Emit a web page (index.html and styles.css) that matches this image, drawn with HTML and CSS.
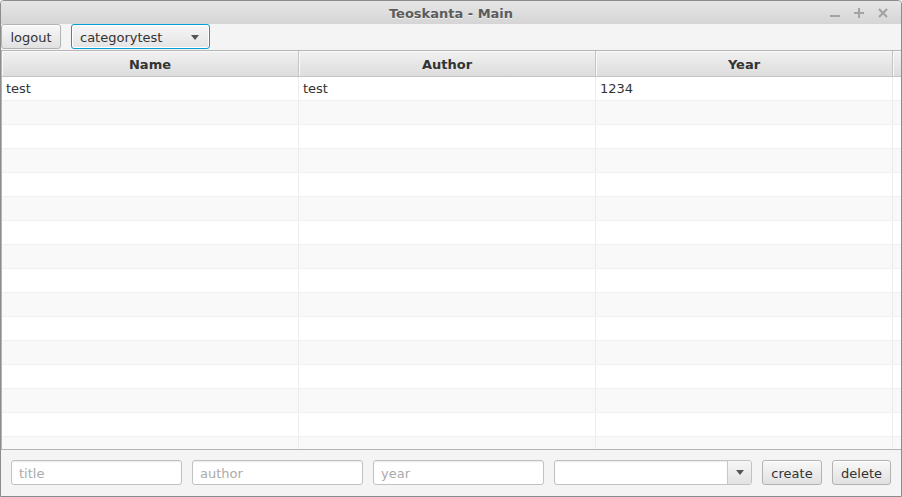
FILE: index.html
```html
<!DOCTYPE html>
<html>
<head>
<meta charset="utf-8">
<link rel="stylesheet" href="styles.css">
</head>
<body>
<div class="window">
  <div class="titlebar">
    <span class="title">Teoskanta - Main</span>
    <div class="controls">
      <svg class="ctl" width="10" height="10" viewBox="0 0 10 10"><rect x="0" y="7" width="10" height="2" fill="#a3a3a3"/></svg>
      <svg class="ctl" width="10" height="10" viewBox="0 0 10 10"><rect x="0" y="4" width="10" height="2" fill="#a3a3a3"/><rect x="4" y="0" width="2" height="10" fill="#a3a3a3"/></svg>
      <svg class="ctl" width="10" height="10" viewBox="0 0 10 10"><path d="M1 1 L9 9 M9 1 L1 9" stroke="#a3a3a3" stroke-width="2.2"/></svg>
    </div>
  </div>
  <div class="toolbar">
    <button class="btn logout">logout</button>
    <div class="combo focused">
      <span class="combo-text">categorytest</span>
      <span class="arrow"></span>
    </div>
  </div>
  <div class="table">
    <div class="thead">
      <div class="th col">Name</div>
      <div class="th col">Author</div>
      <div class="th col">Year</div>
      <div class="th filler"></div>
    </div>
    <div class="tbody">
      <div class="tr"><div class="td col">test</div><div class="td col">test</div><div class="td col">1234</div><div class="td filler"></div></div>
      <div class="tr"><div class="td col"></div><div class="td col"></div><div class="td col"></div><div class="td filler"></div></div>
      <div class="tr"><div class="td col"></div><div class="td col"></div><div class="td col"></div><div class="td filler"></div></div>
      <div class="tr"><div class="td col"></div><div class="td col"></div><div class="td col"></div><div class="td filler"></div></div>
      <div class="tr"><div class="td col"></div><div class="td col"></div><div class="td col"></div><div class="td filler"></div></div>
      <div class="tr"><div class="td col"></div><div class="td col"></div><div class="td col"></div><div class="td filler"></div></div>
      <div class="tr"><div class="td col"></div><div class="td col"></div><div class="td col"></div><div class="td filler"></div></div>
      <div class="tr"><div class="td col"></div><div class="td col"></div><div class="td col"></div><div class="td filler"></div></div>
      <div class="tr"><div class="td col"></div><div class="td col"></div><div class="td col"></div><div class="td filler"></div></div>
      <div class="tr"><div class="td col"></div><div class="td col"></div><div class="td col"></div><div class="td filler"></div></div>
      <div class="tr"><div class="td col"></div><div class="td col"></div><div class="td col"></div><div class="td filler"></div></div>
      <div class="tr"><div class="td col"></div><div class="td col"></div><div class="td col"></div><div class="td filler"></div></div>
      <div class="tr"><div class="td col"></div><div class="td col"></div><div class="td col"></div><div class="td filler"></div></div>
      <div class="tr"><div class="td col"></div><div class="td col"></div><div class="td col"></div><div class="td filler"></div></div>
      <div class="tr"><div class="td col"></div><div class="td col"></div><div class="td col"></div><div class="td filler"></div></div>
      <div class="tr"><div class="td col"></div><div class="td col"></div><div class="td col"></div><div class="td filler"></div></div>
    </div>
  </div>
  <div class="bottombar">
    <input class="field" type="text" placeholder="title">
    <input class="field" type="text" placeholder="author">
    <input class="field" type="text" placeholder="year">
    <div class="combo editable">
      <span class="combo-input"></span>
      <span class="combo-btn"><span class="arrow"></span></span>
    </div>
    <button class="btn create">create</button>
    <button class="btn delete">delete</button>
  </div>
</div>
</body>
</html>
```
FILE: styles.css
```css
* { box-sizing: border-box; }
html, body { margin: 0; padding: 0; background: #f4f4f4; }
body { font-family: "DejaVu Sans", "Liberation Sans", sans-serif; font-size: 13px; color: #333; }

.window {
  width: 902px;
  height: 497px;
  border: 1px solid #8c8c8c;
  border-radius: 4px 4px 0 0;
  background: #f4f4f4;
  display: flex;
  flex-direction: column;
  overflow: hidden;
}

.titlebar {
  height: 23px;
  flex: none;
  background: linear-gradient(#e6e6e6, #d5d5d5);
  display: flex;
  align-items: center;
  justify-content: center;
  padding-top: 2px;
  position: relative;
}
.title {
  font-weight: bold;
  font-size: 13px;
  color: #5c5c5c;
  text-shadow: 0 1px 0 rgba(255,255,255,0.6);
}
.controls {
  position: absolute;
  right: 13px;
  top: 7px;
  height: 10px;
  display: flex;
  align-items: center;
  gap: 14px;
}
.ctl { display: block; }

.toolbar {
  height: 26px;
  flex: none;
  display: flex;
  align-items: flex-start;
  gap: 10px;
  padding-left: 0;
}

.btn {
  font-family: inherit;
  font-size: 13px;
  color: #333;
  height: 25px;
  padding: 1px 8px 0;
  border: 1px solid #b3b3b3;
  border-radius: 3px;
  background: linear-gradient(#f8f8f8, #e1e1e1);
  box-shadow: inset 0 1px 0 #ffffff;
  margin: 0;
}
.logout { width: 60px; }

.combo {
  display: flex;
  align-items: center;
  height: 25px;
  border-radius: 3px;
}
.combo.focused {
  width: 139px;
  margin-left: 0;
  border: 1px solid #039ed3;
  box-shadow: inset 0 0 0 1px #ffffff;
  background: linear-gradient(#f6f6f6, #e4e4e4);
  padding: 1px 10px 0 8px;
  justify-content: space-between;
}
.arrow {
  width: 0;
  height: 0;
  border-left: 4px solid transparent;
  border-right: 4px solid transparent;
  border-top: 5px solid #555;
}

.table {
  height: 400px;
  flex: none;
  border-top: 1px solid #b5b5b5;
  border-bottom: 1px solid #b5b5b5;
  border-left: 1px solid #b5b5b5;
  background: #fff;
  display: flex;
  flex-direction: column;
  overflow: hidden;
}
.thead {
  height: 26px;
  flex: none;
  display: flex;
  border-bottom: 1px solid #c4c4c4;
  background: linear-gradient(#f1f1f1, #dddddd);
}
.th {
  height: 25px;
  display: flex;
  align-items: center;
  justify-content: center;
  padding-top: 2px;
  font-weight: bold;
  color: #333;
  border-right: 1px solid #c4c4c4;
  box-shadow: inset 1px 1px 0 #fafafa;
}
.col { width: 297px; flex: none; }
.filler { width: 7px; flex: none; }
.thead .filler { border-right: none; }

.tbody { flex: 1; overflow: hidden; }
.tr {
  height: 24px;
  display: flex;
  background: #ffffff;
  border-bottom: 1px solid #f0f0f0;
}
.tr:nth-child(even) { background: #f9f9f9; }
.td {
  height: 23px;
  padding: 0 4px;
  display: flex;
  align-items: center;
  border-right: 1px solid #ececec;
  color: #333;
}
.td.filler { border-right: none; }

.bottombar {
  flex: 1;
  display: flex;
  align-items: flex-start;
  padding: 10px 0 0 10px;
  gap: 10px;
}
.field {
  width: 171px;
  height: 25px;
  margin: 0;
  border: 1px solid #c2c2c2;
  border-radius: 3px;
  background: #fff;
  box-shadow: inset 0 1px 1px #ececec;
  padding: 2px 7px 0;
  font-family: inherit;
  font-size: 13px;
  color: #333;
  outline: none;
}
.field::placeholder { color: #ababab; }

.combo.editable {
  width: 198px;
  border: 1px solid #c2c2c2;
  overflow: hidden;
  background: #fff;
}
.combo-input { flex: 1; height: 100%; box-shadow: inset 0 1px 1px #ececec; }
.combo-btn {
  width: 24px;
  height: 100%;
  border-left: 1px solid #c8c8c8;
  background: linear-gradient(#f6f6f6, #e2e2e2);
  display: flex;
  align-items: center;
  justify-content: center;
}
.create { width: 60px; padding: 1px 0 0; }
.delete { width: 59px; padding: 1px 0 0; }
```
